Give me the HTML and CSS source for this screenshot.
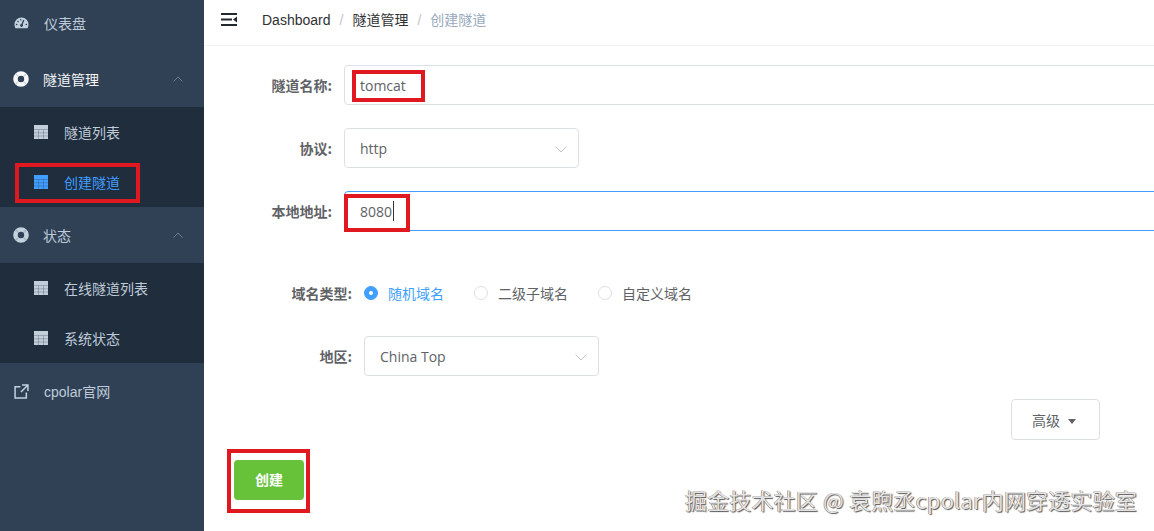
FILE: index.html
```html
<!DOCTYPE html>
<html lang="zh">
<head>
<meta charset="utf-8">
<title>创建隧道</title>
<link rel="stylesheet" href="styles.css">
</head>
<body>
<svg class="defs" width="0" height="0" aria-hidden="true">
  <symbol id="i-table" viewBox="0 0 14 14">
    <path d="M0 0h14v14H0z" fill="currentColor"/>
    <path d="M0 4.500h14M0 7.800h14M0 11h14M4.500 4.500v9.500M9.500 4.500v9.500" stroke="#1f2d3d" stroke-opacity=".25" stroke-width="1" fill="none"/>
  </symbol>
  <symbol id="i-ring" viewBox="0 0 16 16">
    <circle cx="8" cy="8" r="5.500" fill="none" stroke="currentColor" stroke-width="4.600"/>
    <path d="M2.700 2.700l2.500 2.500M13.300 2.700l-2.500 2.500M2.700 13.300l2.500-2.500M13.300 13.300l-2.500-2.500" stroke="#304156" stroke-opacity=".2" stroke-width="1.300"/>
  </symbol>
</svg>
<div class="app">
  <nav class="sidebar">
    <a class="nav-row">
      <svg class="nav-icon gauge" viewBox="0 0 15 12"><path d="M7.500.500a7 7 0 0 0-7 7c0 1.500.3 2.700 1 3.800h12c.7-1.100 1-2.300 1-3.800a7 7 0 0 0-7-7z" fill="currentColor"/><path d="M7.500 8.500L9.800 3" stroke="#304156" stroke-width="1.300"/><circle cx="7.500" cy="8.500" r="1.400" fill="#304156"/><circle cx="4" cy="4.500" r=".8" fill="#304156"/><circle cx="2.700" cy="7.500" r=".8" fill="#304156"/><circle cx="12.300" cy="7.500" r=".8" fill="#304156"/><circle cx="6.800" cy="2.800" r=".8" fill="#304156"/></svg>
      <span>仪表盘</span>
    </a>
    <a class="nav-row nav-row-group is-open">
      <svg class="nav-icon"><use href="#i-ring"/></svg>
      <span>隧道管理</span>
      <svg class="chevron" viewBox="0 0 10 6"><path d="M.5 5.500L5 1l4.500 4.500" fill="none" stroke="currentColor"/></svg>
    </a>
    <div class="submenu">
      <a class="sub-row"><svg class="sub-icon"><use href="#i-table"/></svg><span>隧道列表</span></a>
      <a class="sub-row is-active"><svg class="sub-icon"><use href="#i-table"/></svg><span>创建隧道</span></a>
    </div>
    <a class="nav-row nav-row-group">
      <svg class="nav-icon"><use href="#i-ring"/></svg>
      <span>状态</span>
      <svg class="chevron" viewBox="0 0 10 6"><path d="M.5 5.500L5 1l4.500 4.500" fill="none" stroke="currentColor"/></svg>
    </a>
    <div class="submenu">
      <a class="sub-row"><svg class="sub-icon"><use href="#i-table"/></svg><span>在线隧道列表</span></a>
      <a class="sub-row"><svg class="sub-icon"><use href="#i-table"/></svg><span>系统状态</span></a>
    </div>
    <a class="nav-row">
      <svg class="nav-icon link" viewBox="0 0 14 14"><path d="M6 2.500H1v10.500h10.500V8M7.500 1h5.500v5.500M13 1L6.500 7.500" fill="none" stroke="currentColor" stroke-width="1.400"/></svg>
      <span>cpolar官网</span>
    </a>
  </nav>
  <main class="main">
    <header class="topbar">
      <svg class="hamburger" viewBox="0 0 16 13"><path d="M0 1h16M0 6.500h11M0 12h16" stroke="#23272e" stroke-width="2"/><path d="M16 3.500L12 6.500l4 3z" fill="#23272e"/></svg>
      <div class="crumbs">
        <span class="crumb">Dashboard</span><span class="sep">/</span><span class="crumb">隧道管理</span><span class="sep">/</span><span class="crumb crumb-current">创建隧道</span>
      </div>
    </header>
    <form class="form">
      <div class="field field-name">
        <label class="label">隧道名称:</label>
        <div class="control input">tomcat</div>
      </div>
      <div class="field field-proto">
        <label class="label">协议:</label>
        <div class="control select">http<svg class="caret" viewBox="0 0 12 7"><path d="M.5.500L6 6l5.500-5.500" fill="none" stroke="currentColor"/></svg></div>
      </div>
      <div class="field field-addr">
        <label class="label">本地地址:</label>
        <div class="control input is-focus">8080<i class="cursor"></i></div>
      </div>
      <div class="field field-wide field-domain">
        <label class="label">域名类型:</label>
        <div class="radios">
          <span class="radio is-checked"><i class="dot"></i>随机域名</span>
          <span class="radio"><i class="dot"></i>二级子域名</span>
          <span class="radio"><i class="dot"></i>自定义域名</span>
        </div>
      </div>
      <div class="field field-wide field-region">
        <label class="label">地区:</label>
        <div class="control select">China Top<svg class="caret" viewBox="0 0 12 7"><path d="M.5.500L6 6l5.500-5.500" fill="none" stroke="currentColor"/></svg></div>
      </div>
      <div class="actions-adv"><button type="button" class="btn-adv">高级<i class="tri"></i></button></div>
      <div class="actions-create"><button type="button" class="btn-create">创建</button></div>
    </form>
  </main>
</div>
<div class="mark mark-nav"></div>
<div class="mark mark-name"></div>
<div class="mark mark-addr"></div>
<div class="mark mark-create"></div>
<div class="watermark">掘金技术社区 @ 袁煦丞cpolar内网穿透实验室</div>
</body>
</html>
```
FILE: styles.css
```css
* { box-sizing: border-box; }
html, body { margin: 0; height: 100%; overflow: hidden; background: #fff; }
body { font-family: "Open Sans", "Noto Sans CJK SC", sans-serif; font-size: 14px; color: #606266; position: relative; }
.defs { position: absolute; }
.app { display: flex; height: 531px; }

.sidebar { width: 204px; flex: none; background: #304156; color: #bfcbd9; overflow: hidden; font-family: "Liberation Sans", "Noto Sans CJK SC", sans-serif; }
.nav-row { display: flex; align-items: center; height: 56px; padding-left: 14px; font-size: 14px; }
.nav-row:first-child { margin-top: -5px; }
.nav-row > span { margin-left: 15px; }
.nav-row-group { padding-left: 13px; }
.nav-row-group > span { margin-left: 14px; }
.is-open { color: #f4f4f5; }
.nav-icon { width: 15px; height: 15px; flex: none; color: #c3d0de; }
.nav-row-group .nav-icon { width: 16px; height: 16px; }
.is-open .nav-icon { color: #f7f9fb; }
.gauge { height: 12px; }
.chevron { width: 10px; height: 6px; margin-left: auto; margin-right: 21px; color: #6d7c8e; }
.submenu { background: #1f2d3d; }
.sub-row { display: flex; align-items: center; height: 50px; padding-left: 34px; }
.sub-icon { width: 14px; height: 14px; flex: none; color: #c3cedb; margin-top: -1px; }
.sub-row > span { margin-left: 16px; }
.is-active { color: #409eff; }
.is-active .sub-icon { color: #409eff; }

.main { flex: 1; min-width: 0; overflow: hidden; }
.topbar { height: 46px; display: flex; align-items: center; border-bottom: 1px solid #f3f3f3; padding-left: 17px; padding-bottom: 6px; }
.hamburger { width: 16px; height: 13px; flex: none; margin-top: -1px; }
.crumbs { margin-left: 25px; display: flex; align-items: baseline; line-height: 20px; font-family: "Liberation Sans", "Noto Sans CJK SC", sans-serif; }
.crumb { color: #303133; }
.crumb-current { color: #97a8be; }
.sep { color: #c0c4cc; margin: 0 9px; }

.form { display: flex; flex-direction: column; }
.field { display: flex; align-items: center; }
.label { width: 128px; flex: none; text-align: right; margin-right: 12px; font-weight: 700; font-size: 14px; color: #606266; font-family: "Noto Sans CJK SC", sans-serif; }
.field-wide .label { width: 148px; }
.control { height: 40px; flex: none; border: 1px solid #dcdfe6; border-radius: 4px; padding-left: 15px; display: flex; align-items: center; font-size: 14px; background: #fff; }
.input { width: 900px; }
.select { width: 235px; position: relative; }
.is-focus { border-color: #409eff; }
.cursor { width: 1px; height: 20px; background: #333; margin-left: 1px; }
.caret { position: absolute; right: 11px; top: 17px; width: 12px; height: 7px; color: #c0c4cc; }
.field-name { margin-top: 19px; }
.field-proto { margin-top: 23px; }
.field-addr { margin-top: 23px; }
.field-domain { margin-top: 52px; height: 20px; }
.field-region { margin-top: 33px; }
.radios { display: flex; font-family: "Noto Sans CJK SC", sans-serif; font-size: 14px; }
.radio { display: flex; align-items: center; margin-right: 30px; }
.dot { width: 14px; height: 14px; border: 1px solid #dcdfe6; border-radius: 50%; margin-right: 10px; }
.is-checked { color: #409eff; }
.is-checked .dot { background: #409eff; border-color: #409eff; position: relative; }
.is-checked .dot::after { content: ""; position: absolute; left: 4px; top: 4px; width: 4px; height: 4px; border-radius: 50%; background: #fff; }
.actions-adv { display: flex; justify-content: flex-end; margin-top: 23px; padding-right: 54px; }
.btn-adv { width: 89px; height: 41px; background: #fff; border: 1px solid #dcdfe6; border-radius: 4px; color: #606266; font: 14px/38px "Noto Sans CJK SC", sans-serif; padding: 0 3px 0 0; }
.tri { display: inline-block; margin-left: 8px; vertical-align: 2px; border: 4px solid transparent; border-top: 5px solid #606266; border-bottom: 0; }
.actions-create { margin-top: 20px; padding-left: 30px; }
.btn-create { width: 70px; height: 40px; background: #67c23a; border: 0; border-radius: 4px; color: #fff; font: 700 14px "Noto Sans CJK SC", sans-serif; padding: 0 0 2px; }

.mark { position: absolute; border: 4px solid #e0181f; }
.mark-nav { left: 15px; top: 163px; width: 125px; height: 40px; }
.mark-name { left: 352px; top: 70px; width: 73px; height: 32px; }
.mark-addr { left: 344px; top: 194px; width: 66px; height: 38px; }
.mark-create { left: 227px; top: 449px; width: 83px; height: 64px; }
.watermark { position: absolute; left: 685px; top: 484px; font: 22px/30px "Noto Sans CJK SC", sans-serif; letter-spacing: .15px; color: #e4e4e4; text-shadow: 1px 1px 1px #555, -.5px -.5px .5px #777; white-space: nowrap; }
```
